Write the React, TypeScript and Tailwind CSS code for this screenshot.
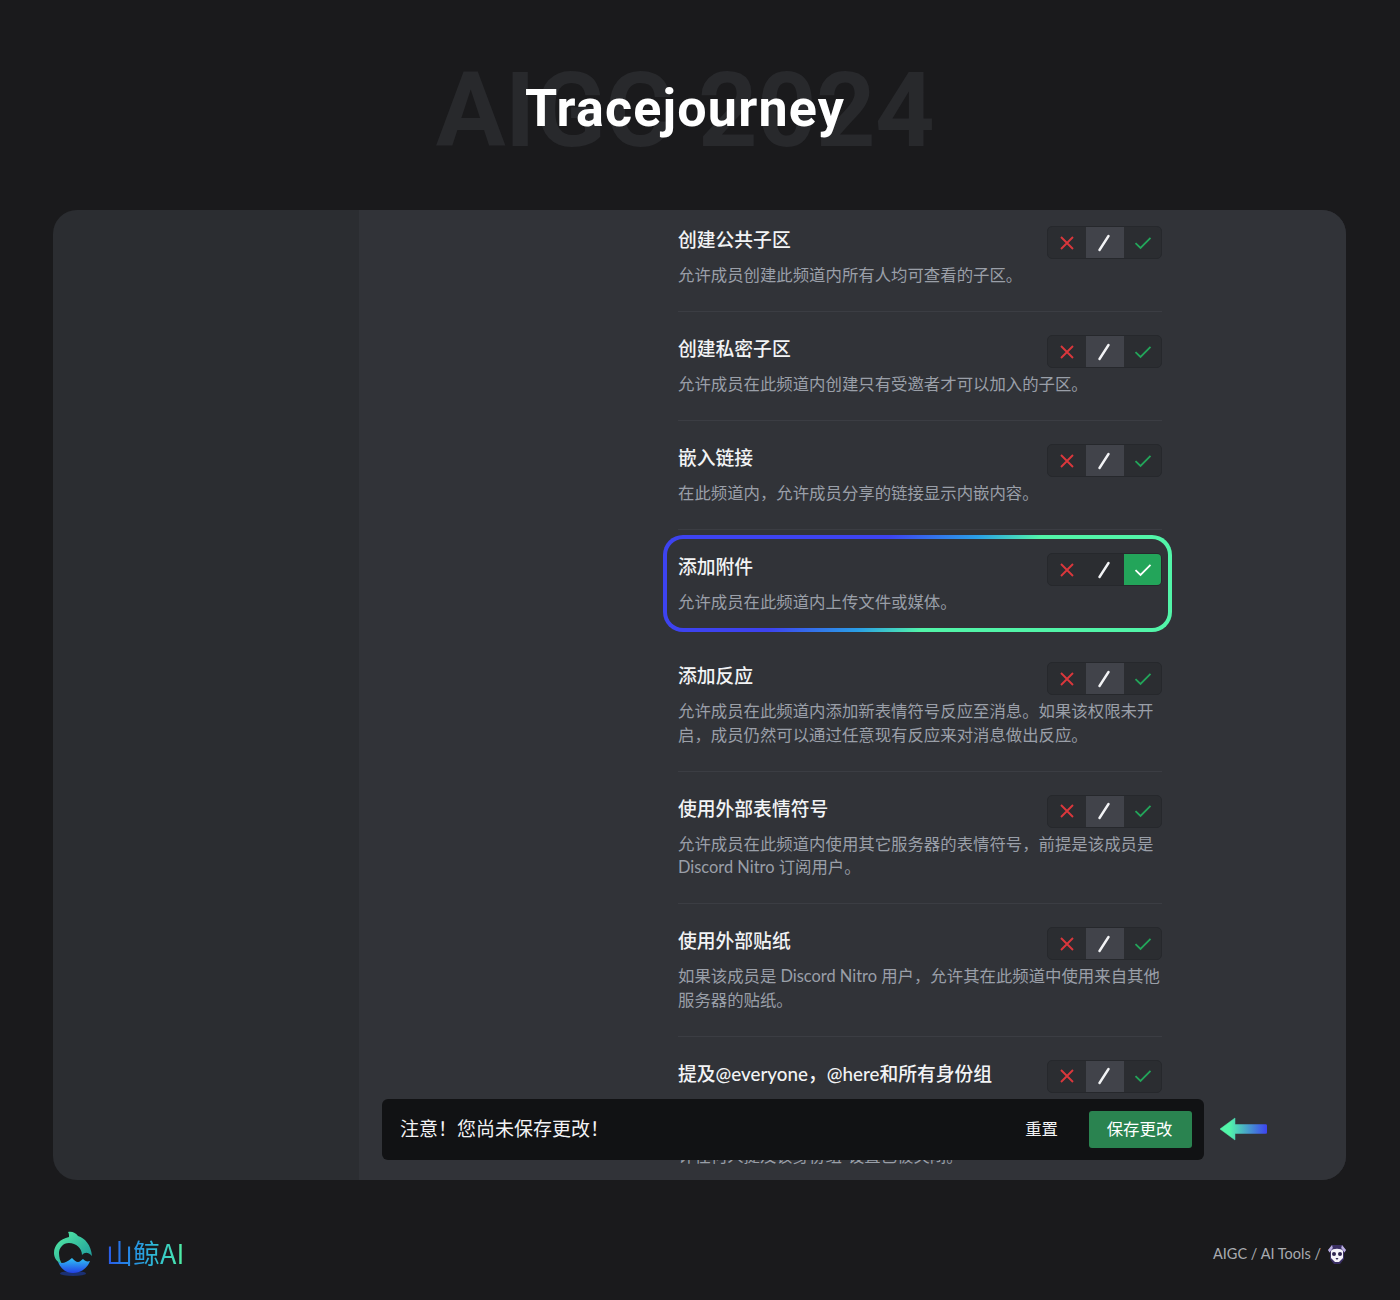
import React from "react";

const rows = [
  { t: "创建公共子区", d: "允许成员创建此频道内所有人均可查看的子区。" },
  { t: "创建私密子区", d: "允许成员在此频道内创建只有受邀者才可以加入的子区。" },
  { t: "嵌入链接", d: "在此频道内，允许成员分享的链接显示内嵌内容。" },
  { t: "添加附件", d: "允许成员在此频道内上传文件或媒体。", on: true },
  { t: "添加反应", d: "允许成员在此频道内添加新表情符号反应至消息。如果该权限未开启，成员仍然可以通过任意现有反应来对消息做出反应。" },
  { t: "使用外部表情符号", d: "允许成员在此频道内使用其它服务器的表情符号，前提是该成员是 Discord Nitro 订阅用户。" },
  { t: "使用外部贴纸", d: "如果该成员是 Discord Nitro 用户，允许其在此频道中使用来自其他服务器的贴纸。" },
  { t: "提及@everyone，@here和所有身份组", d: "允许成员使用 @everyone（频道内所有人）或 @here（频道内所有在线成员）。他们也还可以 @提及所有身份组，即使该身份组的“允许任何人提及该身份组”设置已被关闭。" },
];

function Toggle({ on }: { on?: boolean }) {
  return (
    <div className="flex h-[33px] w-[115px] shrink-0 rounded-[5px] border border-[#26282c] bg-[#2b2d31]">
      <div className="flex w-[38px] items-center justify-center">
        <svg width="16" height="16" viewBox="0 0 16 16" fill="none" stroke="#da373c" strokeWidth="1.9">
          <path d="M2 2 14 14M14 2 2 14" />
        </svg>
      </div>
      <div className={`flex w-[38px] items-center justify-center ${on ? "" : "bg-[#41434a]"}`}>
        <svg width="14" height="18" viewBox="0 0 14 18" fill="none" stroke="#f2f3f5" strokeWidth="2.4" strokeLinecap="round">
          <path d="M1.5 16 10.5 2" />
        </svg>
      </div>
      <div className={`flex flex-1 items-center justify-center rounded-r-[4px] ${on ? "bg-[#23a55a]" : ""}`}>
        <svg width="18" height="14" viewBox="0 0 18 14" fill="none" stroke={on ? "#ffffff" : "#23a55a"} strokeWidth="1.8">
          <path d="M1.5 7.2 6.5 12 16.5 1.8" />
        </svg>
      </div>
    </div>
  );
}

function Logo() {
  return (
    <svg width="40" height="46" viewBox="0 0 40 46" fill="none" className="shrink-0">
      <defs>
        <linearGradient id="lg1" x1="0" y1="0" x2="1" y2="1">
          <stop offset="0" stopColor="#58f2a4" />
          <stop offset="1" stopColor="#17909a" />
        </linearGradient>
        <linearGradient id="lg2" x1="0" y1="0" x2="0" y2="1">
          <stop offset="0" stopColor="#2fc4f5" />
          <stop offset="1" stopColor="#2340e6" />
        </linearGradient>
      </defs>
      <ellipse cx="20" cy="42.5" rx="13" ry="2.4" fill="#1c46c8" opacity="0.5" />
      <path d="M15 1C19 0 23 2 25 5 32 7 38 14 39 25 35 21 32 21 29 24 29 17 23 12 16 12 10 12 6 17 6 22 6 26 7 30 9 33 4 31 1 27 1 22 1 14 7 8 16 6 16 4 16 2 15 1Z" fill="url(#lg1)" />
      <path d="M5 31C9 33 13 32 19 27 21 29 23 31 25 31 27 31 28 29 30 28 32 30 34 31 37 30 34 38 27 42 20 42 13 42 8 38 5 31Z" fill="url(#lg2)" />
    </svg>
  );
}

function Dog() {
  return (
    <svg width="22" height="22" viewBox="0 0 22 22" className="shrink-0">
      <path d="M2 7 6 2H16L20 7 18 10V16L14 21H8L4 16V10Z" fill="#3a2f63" />
      <path d="M5 8C6 5 16 5 17 8V15L13 19H9L5 15Z" fill="#f4f2fa" />
      <circle cx="8" cy="11" r="2" fill="#2d2450" />
      <circle cx="14" cy="11" r="2" fill="#2d2450" />
      <path d="M9.5 15H12.5L11 17Z" fill="#2d2450" />
      <path d="M2 7 6 2 6.8 5 3.5 9.5Z M20 7 16 2 15.2 5 18.5 9.5Z" fill="#b9aee0" />
    </svg>
  );
}

export default function App() {
  const sans = "font-['Lato','Noto_Sans_CJK_SC',sans-serif]";
  return (
    <div className={`flex h-[1300px] w-[1400px] flex-col overflow-hidden bg-[#1a1a1c] ${sans}`}>
      <header className="grid h-[210px] shrink-0 place-items-center pr-[30px] pt-[10px]">
        <div className="col-start-1 row-start-1 mt-[2px] font-['Roboto',sans-serif] text-[104px] font-bold leading-none tracking-[-0.6px] text-[#28292c]">
          AIGC 2024
        </div>
        <h1 className="col-start-1 row-start-1 mb-[2px] font-['Roboto',sans-serif] text-[52px] font-bold leading-none tracking-[1.2px] text-white">
          Tracejourney
        </h1>
      </header>

      <main className="mx-[53px] flex h-[970px] w-[1293px] shrink-0 overflow-hidden rounded-[24px] bg-[#2b2d31]">
        <aside className="w-[306px] shrink-0" />
        <section className="relative flex-1 overflow-hidden bg-[#313338] pl-[319px]">
          <div className="-mt-[7px] w-[484px]">
            {rows.map((r) => (
              <div
                key={r.t}
                className={`relative flex items-start justify-between border-b pb-[24.5px] pt-[23px] ${r.on ? "border-transparent" : "border-[#3b3d43]"}`}
              >
                {r.on && (
                  <div className="absolute -left-[15px] -right-[10px] top-[5px] h-[97px] rounded-[20px] border-[4px] border-transparent [background:linear-gradient(#313338,#313338)_padding-box,linear-gradient(142deg,#3d43f0_36%,#2a9fe6_50%,#52f5a9_60%)_border-box]" />
                )}
                <div className="relative min-w-0 flex-1">
                  <div className="mt-[2px] whitespace-nowrap text-[18.8px] font-medium leading-[24px] text-[#f2f3f5]">{r.t}</div>
                  <div className="mt-[11px] text-[16.4px] leading-[23.5px] text-[#9a9fa8]">{r.d}</div>
                </div>
                <div className="absolute right-0 top-[23px]">
                  <Toggle on={r.on} />
                </div>
              </div>
            ))}
          </div>

          <div className="absolute left-[23px] top-[889px] flex h-[61px] w-[822px] items-center rounded-[6px] bg-[#111214] pl-[18px] pr-[12px]">
            <span className="flex-1 text-[19px] text-[#f2f3f5]">注意！您尚未保存更改！</span>
            <span className="mr-[31px] text-[16.4px] text-[#f2f3f5]">重置</span>
            <span className="flex h-[37px] w-[103px] items-center justify-center rounded-[3px] bg-[#2a8350] pr-[2px] text-[16.4px] text-white">保存更改</span>
          </div>
          <svg width="48" height="24" viewBox="0 0 48 24" className="absolute left-[860px] top-[907px]">
            <defs>
              <linearGradient id="arr" x1="0" y1="0" x2="1" y2="0">
                <stop offset="0.2" stopColor="#52f5a9" />
                <stop offset="1" stopColor="#3d43f0" />
              </linearGradient>
            </defs>
            <path
              d="M1 12 16 1V7.5H46.5C47.5 7.5 48 8 48 9V15C48 16 47.5 16.5 46.5 16.5H16V23Z"
              fill="url(#arr)"
              stroke="url(#arr)"
              strokeWidth="0.5"
              strokeLinejoin="round"
            />
          </svg>
        </section>
      </main>

      <footer className="ml-[53px] mr-[52px] flex flex-1 items-center justify-between pt-[28px]">
        <div className="flex items-center gap-[13px]">
          <Logo />
          <span className="mb-[3px] bg-gradient-to-r from-[#2c55e8] via-[#2aa6e0] to-[#52f0a0] bg-clip-text font-['Noto_Sans_CJK_SC',sans-serif] text-[27px] font-normal leading-none text-transparent">
            山鲸AI
          </span>
        </div>
        <div className="flex items-center gap-[5px] text-[14.5px] text-[#a9abb0]">
          <span>AIGC / AI Tools /</span>
          <Dog />
        </div>
      </footer>
    </div>
  );
}
